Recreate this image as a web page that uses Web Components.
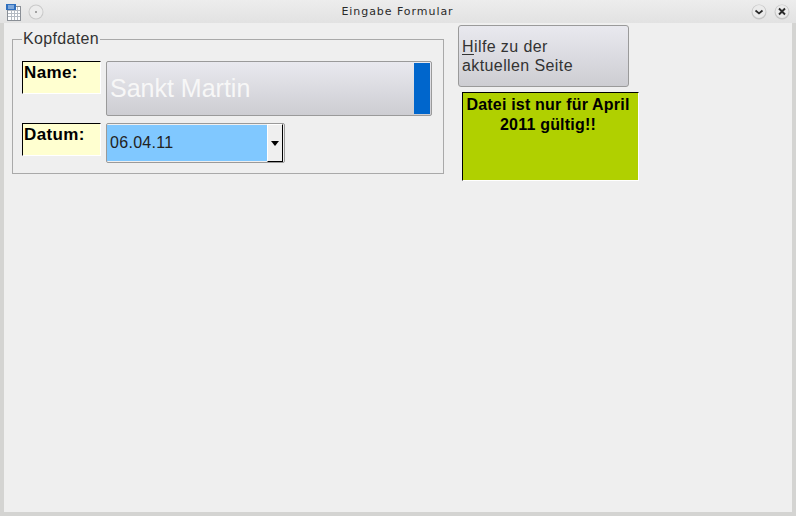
<!DOCTYPE html>
<html lang="de">
<head>
<meta charset="utf-8">
<title>Eingabe Formular</title>
<style>
    html, body { margin: 0; height: 100%; }
    body { font-family: "Liberation Sans", Arial, sans-serif; overflow: hidden; }
</style>
</head>
<body>
<app-window heading="Eingabe Formular">
    <div style="display:flex;align-items:flex-start">
        <group-box legend="Kopfdaten">
            <form-row>
                <field-label slot="label" style="height:33px">Name:</field-label>
                <name-field>Sankt Martin</name-field>
            </form-row>
            <form-row>
                <field-label slot="label" style="height:33px">Datum:</field-label>
                <date-combo value="06.04.11"></date-combo>
            </form-row>
        </group-box>
        <div style="display:flex;flex-direction:column;margin:0 0 0 14px">
            <help-button></help-button>
            <notice-box>Datei ist nur für April 2011 gültig!!</notice-box>
        </div>
    </div>
</app-window>

<script>
class AppWindow extends HTMLElement {
    constructor() {
        super();
        this.attachShadow({ mode: 'open' });
    }

    connectedCallback() {
        const heading = this.getAttribute('heading');
        this.shadowRoot.innerHTML = `
            <style>
                :host { display: flex; flex-direction: column; width: 796px; height: 516px; background: #d4d4d2; box-sizing: border-box; }
                .title { height: 23px; flex: none; display: flex; align-items: center; padding: 0 6px 0 5px; background: linear-gradient(#ededed, #e2e2e2); }
                .title span { flex: 1; text-align: center; font: 11px "DejaVu Sans", sans-serif; letter-spacing: 0.95px; color: #2a2a2a; }
                .title svg { display: block; flex: none; }
                .left { display: flex; align-items: center; gap: 7px; width: 46px; }
                .right { display: flex; align-items: center; gap: 7px; width: 46px; justify-content: flex-end; }
                .body { flex: 1; margin: 0 4px 4px; background: #efefef; padding: 2px 0 0 8px; }
            </style>
            <div class="title">
                <div class="left">
                    <svg width="16" height="18" viewBox="0 0 16 18">
                        <rect x="2.500" y="3.500" width="13" height="14" fill="#fff" stroke="#8a8f96"/>
                        <path d="M3 7.500h12M3 10.500h12M3 13.500h12M6.500 4v13M9.500 4v13M12.500 4v13" stroke="#b4bac2"/>
                        <rect x="1" y="1" width="10" height="6" fill="#2f6fbe"/>
                        <path d="M3 3h6M3 5h6" stroke="#cfe2f7"/>
                    </svg>
                    <svg width="16" height="16" viewBox="0 0 16 16">
                        <circle cx="8" cy="8" r="7.500" fill="#c9c9c9"/>
                        <circle cx="8" cy="8" r="6.500" fill="#ececec"/>
                        <circle cx="8" cy="8" r="1" fill="#8a8a8a"/>
                    </svg>
                </div>
                <span>${heading}</span>
                <div class="right">
                    <svg width="16" height="16" viewBox="0 0 16 16">
                        <circle cx="8" cy="8" r="7.500" fill="#c6c6c6"/>
                        <circle cx="8" cy="7.500" r="6.500" fill="#ebebeb"/>
                        <path d="M4.500 6.500L8 9.500l3.500-3" fill="none" stroke="#2a2a2a" stroke-width="1.700"/>
                    </svg>
                    <svg width="16" height="16" viewBox="0 0 16 16">
                        <circle cx="8" cy="8" r="7.500" fill="#c6c6c6"/>
                        <circle cx="8" cy="7.500" r="6.500" fill="#ebebeb"/>
                        <path d="M5 4.500l6 6M11 4.500l-6 6" fill="none" stroke="#2a2a2a" stroke-width="1.900"/>
                    </svg>
                </div>
            </div>
            <div class="body"><slot></slot></div>
        `;
    }
}

class GroupBox extends HTMLElement {
    constructor() {
        super();
        this.attachShadow({ mode: 'open' });
    }

    connectedCallback() {
        const legend = this.getAttribute('legend');
        this.shadowRoot.innerHTML = `
            <style>
                :host { display: block; flex: none; width: 432px; box-sizing: border-box; padding-top: 14px; position: relative; }
                .frame { border: 1px solid #a9a9a9; height: 135px; box-sizing: border-box; padding: 21px 11px 0 9px; display: flex; flex-direction: column; gap: 7px; }
                .legend { position: absolute; left: 10px; top: 5px; padding: 0 1px; background: #efefef; font-size: 16px; line-height: 18px; color: #333; letter-spacing: 0.35px; }
            </style>
            <div class="legend">${legend}</div>
            <div class="frame"><slot></slot></div>
        `;
    }
}

class FormRow extends HTMLElement {
    constructor() {
        super();
        this.attachShadow({ mode: 'open' });
    }

    connectedCallback() {
        this.shadowRoot.innerHTML = `
            <style>
                :host { display: flex; align-items: flex-start; gap: 5px; }
            </style>
            <slot name="label"></slot>
            <slot></slot>
        `;
    }
}

class FieldLabel extends HTMLElement {
    constructor() {
        super();
        this.attachShadow({ mode: 'open' });
    }

    connectedCallback() {
        this.shadowRoot.innerHTML = `
            <style>
                :host { display: block; width: 79px; box-sizing: border-box; background: #ffffd0; border: 1px solid; border-color: #000 #fff #fff #000; padding: 0 0 0 1px; font-weight: bold; font-size: 17px; line-height: 22px; letter-spacing: 0.35px; color: #000; }
            </style>
            <slot></slot>
        `;
    }
}

class NameField extends HTMLElement {
    constructor() {
        super();
        this.attachShadow({ mode: 'open' });
    }

    connectedCallback() {
        this.shadowRoot.innerHTML = `
            <style>
                :host { display: flex; align-items: stretch; width: 326px; height: 55px; box-sizing: border-box; border: 1px solid #9a9a9a; border-radius: 2px; background: linear-gradient(#e9e9ef, #cdcdd2); }
                .text { flex: 1; display: flex; align-items: center; padding: 0 0 0 3px; font-size: 25px; color: #f7f7f7; }
                .bar { width: 16px; margin: 1px 1px 1px 0; background: #0066cc; }
            </style>
            <div class="text"><slot></slot></div>
            <div class="bar"></div>
        `;
    }
}

class DateCombo extends HTMLElement {
    constructor() {
        super();
        this.attachShadow({ mode: 'open' });
    }

    connectedCallback() {
        const value = this.getAttribute('value');
        this.shadowRoot.innerHTML = `
            <style>
                :host { display: flex; align-items: stretch; width: 179px; height: 40px; box-sizing: border-box; border: 1px solid #9a9a9a; border-radius: 2px; background: #efefef; }
                .value { flex: 1; display: flex; align-items: center; padding: 0 0 0 3px; margin: 1px 0; background: #80c8ff; font-size: 16px; letter-spacing: 0.3px; color: #222; }
                .arrow { width: 16px; margin-right: 1px; box-sizing: border-box; display: flex; align-items: center; justify-content: center; border: 1px solid; border-color: #fff #000 #000 #fff; background: #efefef; }
                svg { display: block; }
            </style>
            <div class="value">${value}</div>
            <div class="arrow">
                <svg width="8" height="5" viewBox="0 0 8 5"><path d="M0 0h8L4 5z" fill="#000"/></svg>
            </div>
        `;
    }
}

class HelpButton extends HTMLElement {
    constructor() {
        super();
        this.attachShadow({ mode: 'open' });
    }

    connectedCallback() {
        this.shadowRoot.innerHTML = `
            <style>
                :host { display: flex; align-items: center; width: 171px; height: 62px; box-sizing: border-box; border: 1px solid #9a9a9a; border-radius: 3px; padding: 0 0 0 3px; background: linear-gradient(#e9e9ef, #cdcdd2); font-size: 16px; line-height: 19px; letter-spacing: 0.4px; color: #333; }
                u { text-underline-offset: 2px; }
            </style>
            <div><u>H</u>ilfe zu der<br>aktuellen Seite</div>
        `;
    }
}

class NoticeBox extends HTMLElement {
    constructor() {
        super();
        this.attachShadow({ mode: 'open' });
    }

    connectedCallback() {
        this.shadowRoot.innerHTML = `
            <style>
                :host { display: block; width: 177px; height: 89px; margin: 5px 0 0 4px; box-sizing: border-box; border: 1px solid; border-color: #000 #fff #fff #000; padding: 2px 5px 0 0; background: #b0d000; text-align: center; font-weight: bold; font-size: 16px; line-height: 20px; letter-spacing: 0.2px; color: #000; }
            </style>
            <slot></slot>
        `;
    }
}

customElements.define('app-window', AppWindow);
customElements.define('group-box', GroupBox);
customElements.define('form-row', FormRow);
customElements.define('field-label', FieldLabel);
customElements.define('name-field', NameField);
customElements.define('date-combo', DateCombo);
customElements.define('help-button', HelpButton);
customElements.define('notice-box', NoticeBox);
</script>
</body>
</html>
